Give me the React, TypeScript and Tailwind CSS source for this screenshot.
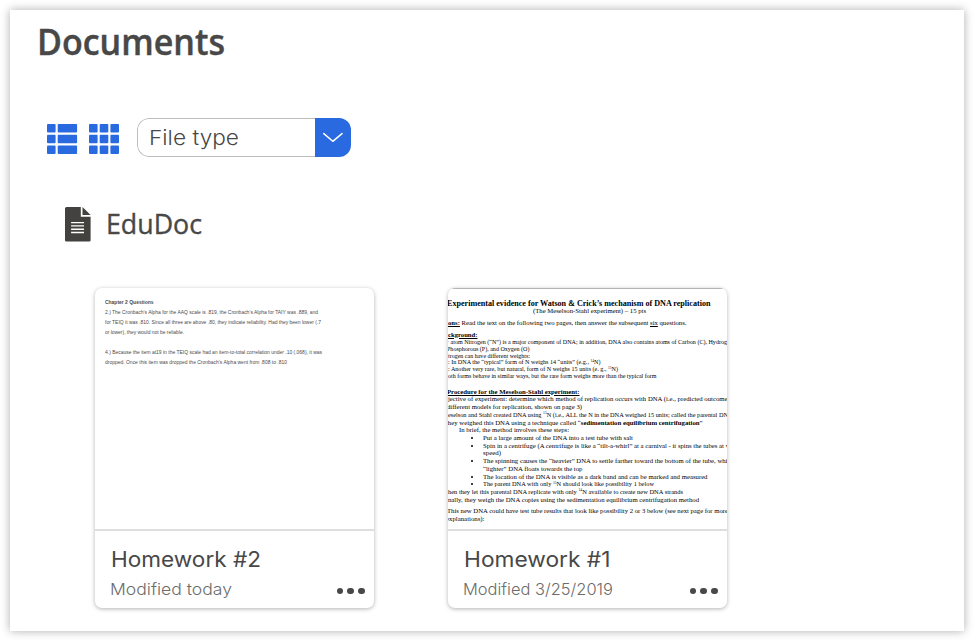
import { useLayoutEffect, useRef, useState } from "react";
import type { ReactNode } from "react";

/** One line of text, stretched horizontally so that it fills the given width. */
function Fit({ width, className = "", children }: { width: number; className?: string; children: ReactNode }) {
  const ref = useRef<HTMLSpanElement>(null);
  const [scale, setScale] = useState(1);
  useLayoutEffect(() => {
    const el = ref.current;
    if (!el) return;
    el.style.transform = "none";
    const next = width / el.getBoundingClientRect().width;
    el.style.transform = `scaleX(${next})`;
    setScale(next);
  }, [width]);
  return (
    <span ref={ref} className={`inline-block origin-left whitespace-pre ${className}`} style={{ transform: `scaleX(${scale})` }}>
      {children}
    </span>
  );
}

type Line = { base: number; x: number; width: number; text: ReactNode; className?: string; bullet?: boolean };

const bold = "font-bold";
const heading = "font-bold underline";
const sup = (n: string) => <sup className="text-[4px] leading-none top-[-2.5px]">{n}</sup>;

const essayLines: Line[] = [
  { base: 16.6, x: -1, width: 263.5, text: "Experimental evidence for Watson & Crick’s mechanism of DNA replication", className: "font-bold text-[7.9px]" },
  { base: 24.2, x: 85, width: 113, text: "(The Meselson-Stahl experiment) – 15 pts" },
  { base: 36, x: 0, width: 238.5, text: <><b className="underline">ons:</b> Read the text on the following two pages, then answer the subsequent <u>six</u> questions.</> },
  { base: 47.6, x: 0, width: 29.5, text: "ckground:", className: heading },
  { base: 54.6, x: -1, width: 280, text: "· atom Nitrogen (“N”) is a major component of DNA; in addition, DNA also contains atoms of Carbon (C), Hydrog" },
  { base: 61.6, x: -1, width: 82.5, text: "Phosphorous (P), and Oxygen (O)" },
  { base: 68.8, x: 0, width: 82, text: "trogen can have different weights:" },
  { base: 75.4, x: 0, width: 152.5, text: <>: In DNA the “typical” form of N weighs 14 “units” (e.g., {sup("14")}N)</> },
  { base: 82.4, x: 0, width: 170, text: <>: Another very rare, but natural, form of N weighs 15 units (e. g., {sup("15")}N)</> },
  { base: 89.4, x: 0, width: 208.5, text: "oth forms behave in similar ways, but the rare form weighs more than the typical form" },
  { base: 105, x: -1, width: 132.5, text: "Procedure for the Meselson-Stahl experiment:", className: heading },
  { base: 112.4, x: 0, width: 279.5, text: "jective of experiment: determine which method of replication occurs with DNA (i.e., predicted outcome" },
  { base: 120.2, x: -1, width: 135, text: "different models for replication, shown on page 3)" },
  { base: 128, x: 0, width: 280, text: <>eselson and Stahl created DNA using {sup("15")}N (i.e., ALL the N in the DNA weighed 15 units; called the parental DN</> },
  { base: 135.7, x: -2, width: 256.5, text: <>they weighed this DNA using a technique called “<b>sedimentation equilibrium centrifugation</b>”</> },
  { base: 143.2, x: 11, width: 110, text: "In brief, the method involves these steps:" },
  { base: 151.2, x: 35, width: 150, text: "Put a large amount of the DNA into a test tube with salt", bullet: true },
  { base: 158.7, x: 35, width: 246, text: "Spin in a centrifuge (A centrifuge is like a “tilt-a-whirl” at a carnival - it spins the tubes at v", bullet: true },
  { base: 166.4, x: 35, width: 18, text: "speed)" },
  { base: 174.2, x: 35, width: 244.5, text: "The spinning causes the “heavier” DNA to settle farther toward the bottom of the tube, whi", bullet: true },
  { base: 182.2, x: 35, width: 99.5, text: "“lighter” DNA floats towards the top" },
  { base: 189.7, x: 35, width: 224.5, text: "The location of the DNA is visible as a dark band and can be marked and measured", bullet: true },
  { base: 197.2, x: 35, width: 171, text: <>The parent DNA with only {sup("15")}N should look like possibility 1 below</>, bullet: true },
  { base: 205, x: 0, width: 235, text: <>hen they let this parental DNA replicate with only {sup("14")}N available to create new DNA strands</> },
  { base: 212.7, x: 0, width: 251, text: "nally, they weigh the DNA copies using the sedimentation equilibrium centrifugation method" },
  { base: 224.4, x: -1, width: 281, text: "This new DNA could have test tube results that look like possibility 2 or 3 below (see next page for more" },
  { base: 232.4, x: -2, width: 38.5, text: "explanations):" },
];

const reportLines: Line[] = [
  { base: 16, x: 10, width: 48.5, text: "Chapter 2 Questions", className: bold },
  { base: 26, x: 10, width: 213, text: "2.) The Cronbach’s Alpha for the AAQ scale is .819, the Cronbach’s Alpha for TAIY was .889, and" },
  { base: 36, x: 10, width: 216, text: "for TEIQ it was .810. Since all three are above .80, they indicate reliability. Had they been lower (.7" },
  { base: 46, x: 10, width: 79, text: "or lower), they would not be reliable." },
  { base: 66, x: 10, width: 217, text: "4.) Because the item at19 in the TEIQ scale had an item-to-total correlation under .10 (.068), it was" },
  { base: 76, x: 10, width: 182, text: "dropped. Once this item was dropped the Cronbach’s Alpha went from .808 to .810" },
];

function Page({ lines, className }: { lines: Line[]; className: string }) {
  return (
    <div className={`h-[241px] overflow-hidden pt-px ${className}`}>
      {lines.map((line, i) => {
        const previous = i === 0 ? 7 : lines[i - 1].base;
        return (
          <div key={i} className="flex items-end leading-[8px]" style={{ height: line.base - previous + (i === 0 ? 8 : 0), paddingLeft: Math.max(line.x, 0), marginLeft: Math.min(line.x, 0) }}>
            {line.bullet && <span className="-ml-[12px] mb-[3px] mr-[10px] size-[2px] shrink-0 rounded-full bg-black" />}
            <Fit width={line.width} className={`shrink-0 ${line.className ?? ""}`}>{line.text}</Fit>
          </div>
        );
      })}
    </div>
  );
}

function Card({ title, titleWidth, modified, modifiedWidth, children }: { title: string; titleWidth: number; modified: string; modifiedWidth: number; children: ReactNode }) {
  return (
    <article className="h-[320px] w-[279px] overflow-hidden rounded-[7px] bg-white shadow-[0_1px_4px_rgba(0,0,0,0.3)]">
      {children}
      <div className="h-[79px] border-t-2 border-[#dedede] pl-[15px] pr-[9.5px] pt-[14px] font-['Inter',sans-serif]">
        <h3 className="ml-px h-[29px] text-[21.5px] leading-[28px] text-[#484848]">
          <Fit width={titleWidth}>{title}</Fit>
        </h3>
        <div className="flex h-[30px] items-center justify-between text-[16.5px] font-light text-[#6c6c6c]">
          <Fit width={modifiedWidth}>{modified}</Fit>
          <button className="mt-[4px] flex gap-[4px]" aria-label="More options">
            <i className="size-[6.6px] rounded-full bg-[#484848]" />
            <i className="size-[6.6px] rounded-full bg-[#484848]" />
            <i className="size-[6.6px] rounded-full bg-[#484848]" />
          </button>
        </div>
      </div>
    </article>
  );
}

function ListIcon() {
  return (
    <svg width="31" height="31" viewBox="0 0 31 31" fill="#2a6ae1">
      {[0, 10.7, 21.4].map((y) => (
        <g key={y}>
          <rect x="0" y={y} width="8.6" height="8.6" rx="1" />
          <rect x="10.7" y={y} width="19.4" height="8.6" rx="1" />
        </g>
      ))}
    </svg>
  );
}

function GridIcon() {
  return (
    <svg width="31" height="31" viewBox="0 0 31 31" fill="#2a6ae1">
      {[0, 10.7, 21.4].map((y) =>
        [0, 10.7, 21.4].map((x) => <rect key={`${x}-${y}`} x={x} y={y} width="8.6" height="8.6" rx="1" />),
      )}
    </svg>
  );
}

export default function App() {
  return (
    <div className="h-[642px] w-[974px] overflow-hidden bg-white p-[10px]">
      <main className="h-[621px] w-[954px] bg-white pl-[29px] pt-[10px] shadow-[0_0_9px_rgba(0,0,0,0.32)]">
        <h1 className="-ml-[2px] h-[46px] font-['Open_Sans',sans-serif] text-[35.5px] font-semibold leading-[42px] text-[#484848] [-webkit-text-stroke:0.4px_#484848]">
          <Fit width={188}>Documents</Fit>
        </h1>
        <div className="mt-[52px] flex h-[39px] items-center pl-[7.5px]">
          <div className="flex gap-[11px] pt-[3px]">
            <ListIcon />
            <GridIcon />
          </div>
          <div className="ml-[17px] flex h-[39px] w-[214px] overflow-hidden rounded-[12px]">
            <div className="w-[178px] rounded-l-[12px] border-[1.5px] border-r-0 border-[#bdbdbd] pl-[11px] font-['Inter',sans-serif] text-[20.5px] font-light leading-[37px] text-[#484848]">
              <Fit width={90}>File type</Fit>
            </div>
            <button className="grid flex-1 place-items-center bg-[#2a6ae1]" aria-label="Choose file type">
              <svg width="20" height="11" viewBox="0 0 20 11" fill="none" stroke="white" strokeWidth="1.5" strokeLinecap="round" strokeLinejoin="round">
                <path d="M.8 1.6 9.8 9.3 19 1.6" />
              </svg>
            </button>
          </div>
        </div>
        <div className="mt-[48px] flex h-[39px] items-center pl-[26px]">
          <svg width="26" height="35" viewBox="0 0 26 35" fill="#43423f">
            <path d="M1.5 0H15.8V9.8H25.6V33.2Q25.6 34.6 24.2 34.6H1.4Q0 34.6 0 33.2V1.5Q0 0 1.5 0Z" />
            <path d="M17.5 0 25.6 8H17.5Z" />
            <path d="M6.1 15.6H19M6.1 18.9H19M6.1 22.2H19M6.1 25.5H19" stroke="white" strokeWidth="1.4" />
          </svg>
          <h2 className="ml-[15px] font-['Open_Sans',sans-serif] text-[26.5px] font-medium text-[#484848] [-webkit-text-stroke:0.35px_#484848]">
            <Fit width={96}>EduDoc</Fit>
          </h2>
        </div>
        <section className="mt-[44px] flex gap-[74px] pl-[56px]">
          <Card title="Homework #2" titleWidth={150} modified="Modified today" modifiedWidth={122}>
            <Page lines={reportLines} className="font-['Liberation_Sans',sans-serif] text-[5.3px] text-[#4b4b4b]" />
          </Card>
          <Card title="Homework #1" titleWidth={146.5} modified="Modified 3/25/2019" modifiedWidth={150}>
            <Page lines={essayLines} className="border-t-[1.5px] border-[#b4b4b4] font-['Liberation_Serif',serif] text-[6.9px] text-black" />
          </Card>
        </section>
      </main>
    </div>
  );
}
